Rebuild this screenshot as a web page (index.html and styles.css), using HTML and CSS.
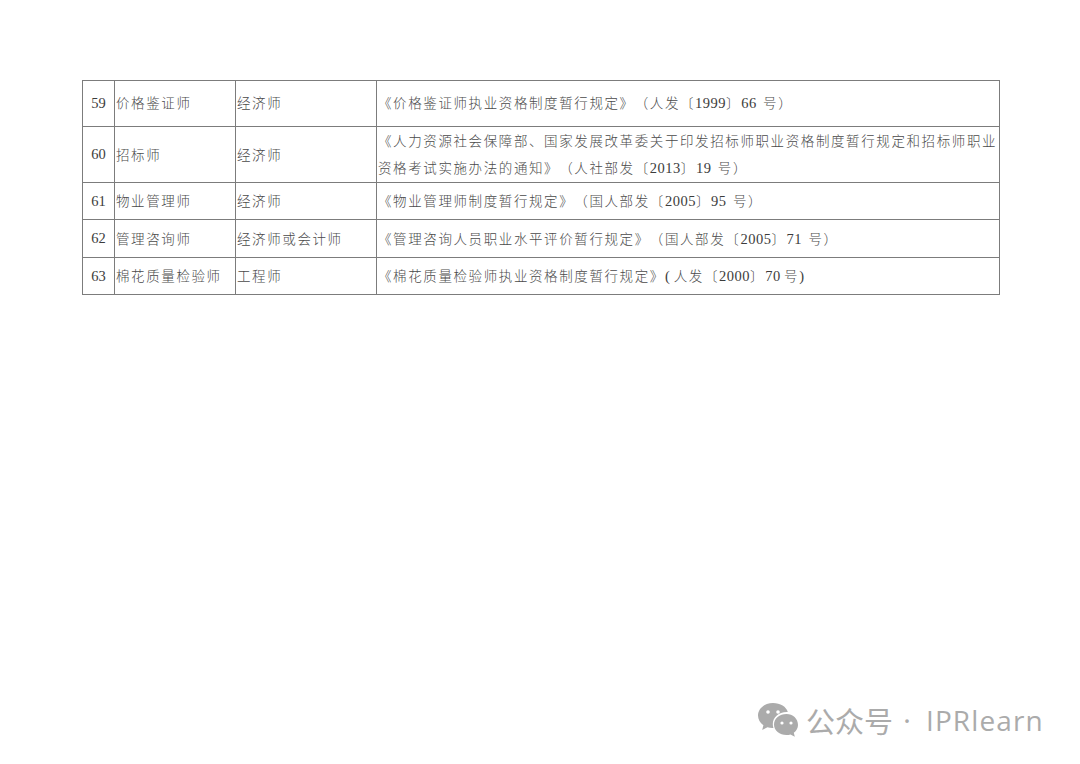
FILE: index.html
```html
<!DOCTYPE html>
<html lang="zh-CN">
<head>
<meta charset="utf-8">
<title>职业资格</title>
<link rel="stylesheet" href="styles.css">
</head>
<body>
<main class="page">
<table class="quals">
<colgroup><col class="c-no"><col class="c-name"><col class="c-title"><col class="c-doc"></colgroup>
<tbody>
<tr class="r59"><td class="no">59</td><td>价格鉴证师</td><td>经济师</td><td>《价格鉴证师执业资格制度暂行规定》（人发〔<span class="num">1999</span>〕<span class="num">66</span><span class="gap"> </span>号）</td></tr>
<tr class="r60"><td class="no">60</td><td>招标师</td><td>经济师</td><td class="two">《人力资源社会保障部、国家发展改革委关于印发招标师职业资格制度暂行规定和招标师职业<br>资格考试实施办法的通知》（人社部发〔<span class="num">2013</span>〕<span class="num">19</span><span class="gap"> </span>号）</td></tr>
<tr class="r61"><td class="no">61</td><td>物业管理师</td><td>经济师</td><td>《物业管理师制度暂行规定》（国人部发〔<span class="num">2005</span>〕<span class="num">95</span><span class="gap"> </span>号）</td></tr>
<tr class="r62"><td class="no">62</td><td>管理咨询师</td><td>经济师或会计师</td><td>《管理咨询人员职业水平评价暂行规定》（国人部发〔<span class="num">2005</span>〕<span class="num">71</span><span class="gap"> </span>号）</td></tr>
<tr class="r63"><td class="no">63</td><td>棉花质量检验师</td><td>工程师</td><td>《棉花质量检验师执业资格制度暂行规定》<span class="paren">(</span>人发〔<span class="num">2000</span>〕<span class="num">70</span><span class="thin"> </span>号<span class="num">)</span></td></tr>
</tbody>
</table>
</main>
<div class="mark">
<svg class="mark-icon" viewBox="0 0 40 34" width="40" height="34" aria-hidden="true">
<path fill="#ababab" d="M15 0C6.700 0 0 5.600 0 12.600c0 3.900 2.100 7.300 5.400 9.600L4.200 27l5.200-2.800c1.600.5 3.300.8 5 .8h1C15 23.700 14.800 22.300 14.800 21c0-6.700 6.200-12 13.700-12h1.300C28.400 3.800 22.300 0 15 0z"/>
<path fill="#ababab" d="M28.500 11C21.500 11 16 15.500 16 21.500S21.500 32 28.500 32c1.400 0 2.800-.2 4-.6l4.300 2.300-1-3.900c2.600-1.900 4.200-4.700 4.200-7.800C40 15.500 34.800 11 28.500 11z"/>
<circle cx="10" cy="9" r="1.800" fill="#fff"/><circle cx="20" cy="9" r="1.800" fill="#fff"/>
<circle cx="24" cy="20" r="1.600" fill="#fff"/><circle cx="33" cy="20" r="1.600" fill="#fff"/>
</svg>
<span class="mark-cn">公众号</span><span class="mark-dot">·</span><span class="mark-en">IPRlearn</span>
</div>
</body>
</html>
```

FILE: styles.css
```css
html, body { margin: 0; padding: 0; background: #fff; }
body { width: 1080px; height: 764px; overflow: hidden; position: relative; }
.page { padding: 80px 0 0 82px; }
.quals {
  border-collapse: collapse;
  table-layout: fixed;
  width: 917px;
  font-family: "Liberation Serif", "Noto Sans CJK SC", serif;
  font-size: 13.5px;
  font-weight: 300;
  letter-spacing: 1.6px;
  color: #4a4a4a;
  text-spacing-trim: space-all;
  text-autospace: no-autospace;
}
.c-no { width: 32px; }
.c-name { width: 121px; }
.c-title { width: 141px; }
.c-doc { width: 623px; }
.quals td {
  border: 1px solid #7c7c7c;
  padding: 0 0 2px 1px;
  white-space: nowrap;
  vertical-align: middle;
}
.quals .r59 td { padding-bottom: 4px; }
.quals td.no { text-align: center; font-size: 14.5px; letter-spacing: 0; padding: 0; color: #3c3c3c; }
.quals td.two { line-height: 27px; padding-bottom: 0; }
.num { font-size: 14.5px; letter-spacing: .5px; color: #3c3c3c; }
.paren { font-size: 14.5px; letter-spacing: 4px; color: #3c3c3c; }
.gap { letter-spacing: 3px; }
.thin { letter-spacing: 0; }
.r59 { height: 46px; }
.r60 { height: 56px; }
.r61 { height: 37px; }
.r62 { height: 38px; }
.r63 { height: 37px; }
.mark {
  position: absolute;
  left: 758px;
  top: 703px;
  display: flex;
  align-items: center;
  color: #ababab;
  height: 34px;
  white-space: nowrap;
}
.mark-icon { display: block; flex: none; margin-right: 8px; }
.mark-cn { flex: none; font-family: "Noto Sans CJK SC", sans-serif; font-size: 29px; line-height: 34px; width: 87px; }
.mark-dot { flex: none; font-family: "Noto Sans", sans-serif; font-size: 28px; line-height: 34px; width: 28px; margin-right: 5px; text-align: center; }
.mark-en { flex: none; font-family: "Open Sans", sans-serif; font-size: 28px; line-height: 34px; letter-spacing: 1.1px; }
```
